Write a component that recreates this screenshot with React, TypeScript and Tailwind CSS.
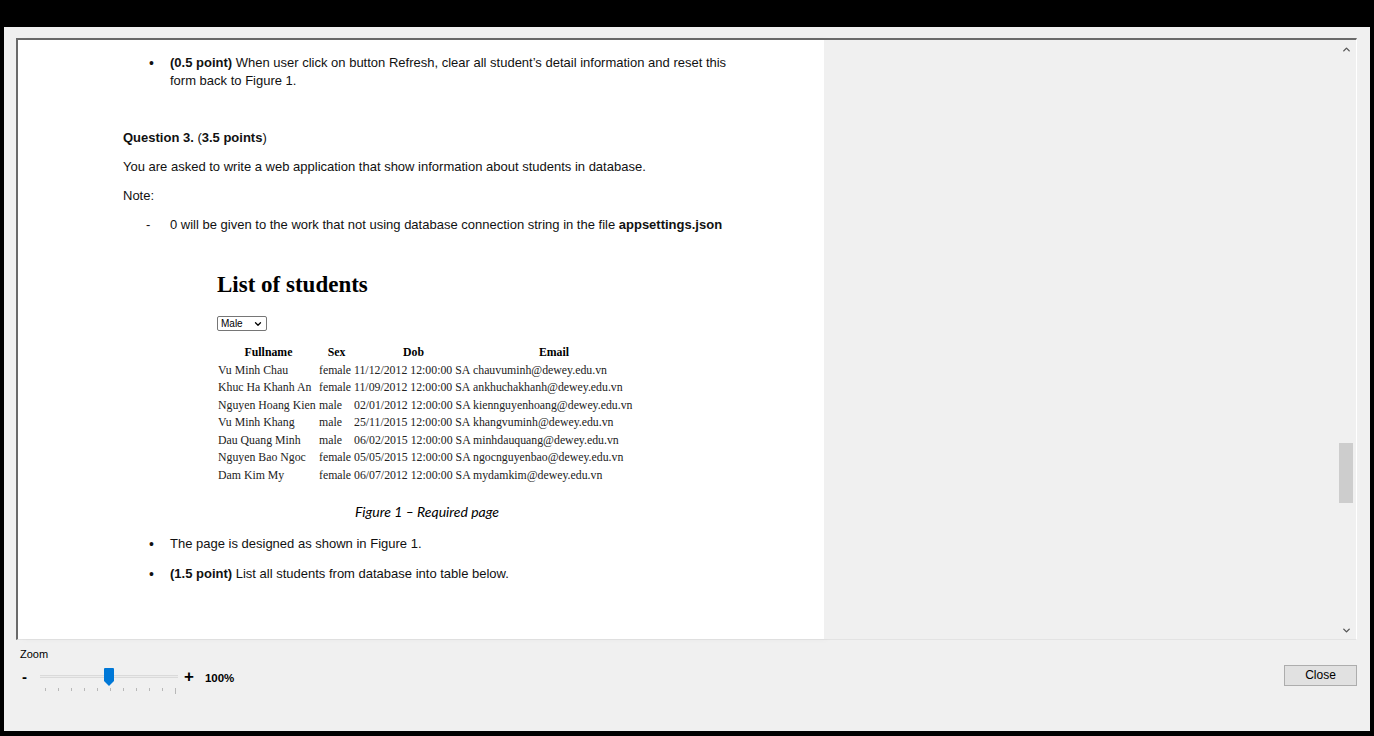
import { ChevronUp, ChevronDown } from "lucide-react";

const students = [
  ["Vu Minh Chau", "female", "11/12/2012 12:00:00 SA", "chauvuminh@dewey.edu.vn"],
  ["Khuc Ha Khanh An", "female", "11/09/2012 12:00:00 SA", "ankhuchakhanh@dewey.edu.vn"],
  ["Nguyen Hoang Kien", "male", "02/01/2012 12:00:00 SA", "kiennguyenhoang@dewey.edu.vn"],
  ["Vu Minh Khang", "male", "25/11/2015 12:00:00 SA", "khangvuminh@dewey.edu.vn"],
  ["Dau Quang Minh", "male", "06/02/2015 12:00:00 SA", "minhdauquang@dewey.edu.vn"],
  ["Nguyen Bao Ngoc", "female", "05/05/2015 12:00:00 SA", "ngocnguyenbao@dewey.edu.vn"],
  ["Dam Kim My", "female", "06/07/2012 12:00:00 SA", "mydamkim@dewey.edu.vn"],
];

const ticks = [0, 1, 2, 3, 4, 5, 6, 7, 8, 9, 10];

function Bullet({ children }: { children: React.ReactNode }) {
  return (
    <div className="flex">
      <div className="w-[47px] pl-[26px] text-[14px]">•</div>
      <div className="flex-1">{children}</div>
    </div>
  );
}

export default function App() {
  return (
    <div className="h-[736px] w-[1374px] bg-black pt-[27px] pl-[4px] pr-[4px] pb-[5px] flex">
      <div className="flex-1 bg-[#f0f0f0] flex flex-col pt-[11px] pl-[12px] pr-[13px]">
        {/* document frame */}
        <div className="h-[602px] flex border-l-2 border-t-2 border-[#6a6a6a] border-r border-r-white border-b border-b-[#e3e3e3]">
          <div
            className="w-[806px] bg-white overflow-hidden pt-[14px] text-[13px] leading-[18px] text-[#111] shadow-[4px_0_6px_rgba(0,0,0,0.04)]"
            style={{ fontFamily: '"Liberation Sans", Arial, sans-serif' }}
          >
            <div className="pl-[105px] pr-[90px]">
              <Bullet>
                <b>(0.5 point)</b> When user click on button Refresh, clear all student’s detail information and reset this form back to Figure 1.
              </Bullet>

              <div className="mt-[39px]">
                <b>Question 3.</b> (<b>3.5 points</b>)
              </div>
              <div className="mt-[11px] whitespace-nowrap">
                You are asked to write a web application that show information about students in database.
              </div>
              <div className="mt-[11px]">Note:</div>
              <div className="mt-[11px] flex">
                <div className="w-[47px] pl-[23px]">-</div>
                <div className="whitespace-nowrap">
                  0 will be given to the work that not using database connection string in the file <b>appsettings.json</b>
                </div>
              </div>

              {/* figure */}
              <div
                className="mt-[36px] pl-[94px] text-[#222]"
                style={{ fontFamily: '"Liberation Serif", "Times New Roman", serif' }}
              >
                <div className="text-[23px] leading-[30px] font-bold text-black">List of students</div>
                <div className="mt-[16px] w-[50px] h-[15px] border border-[#767676] rounded-[2px] flex items-center justify-between px-[3px] text-[10px] leading-none text-black" style={{ fontFamily: '"Liberation Sans", Arial, sans-serif' }}>
                  <span>Male</span>
                  <ChevronDown size={10} strokeWidth={3} />
                </div>
                <div className="mt-[13px] ml-[1px] grid grid-cols-[101px_35px_119px_162px] text-[11.8px] leading-[17.5px]">
                  <div className="font-bold text-center text-black">Fullname</div>
                  <div className="font-bold text-center text-black">Sex</div>
                  <div className="font-bold text-center text-black">Dob</div>
                  <div className="font-bold text-center text-black">Email</div>
                  {students.map((s, i) => (
                    <div key={i} className="contents">
                      <div className="whitespace-nowrap">{s[0]}</div>
                      <div>{s[1]}</div>
                      <div className="whitespace-nowrap">{s[2]}</div>
                      <div className="whitespace-nowrap">{s[3]}</div>
                    </div>
                  ))}
                </div>
              </div>
              <div
                className="mt-[19px] pl-[232px] italic text-[14px] text-black"
                style={{ fontFamily: "Lato, 'Open Sans', sans-serif" }}
              >
                Figure 1 – Required page
              </div>

              <div className="mt-[14px]">
                <Bullet>The page is designed as shown in Figure 1.</Bullet>
              </div>
              <div className="mt-[12px]">
                <Bullet>
                  <b>(1.5 point)</b> List all students from database into table below.
                </Bullet>
              </div>
            </div>
          </div>

          <div className="flex-1 bg-[#f0f0f0]" />

          {/* scrollbar */}
          <div className="w-[19px] bg-[#f0f0f0] flex flex-col items-center">
            <div className="h-[17px] flex items-center justify-center pt-[2px] text-[#555]">
              <ChevronUp size={11} strokeWidth={3} />
            </div>
            <div className="flex-1 w-full relative">
              <div className="absolute left-[2px] top-[386px] w-[14px] h-[60px] bg-[#cdcdcd]" />
            </div>
            <div className="h-[17px] flex items-center justify-center text-[#555]">
              <ChevronDown size={11} strokeWidth={3} />
            </div>
          </div>
        </div>

        {/* bottom zoom bar */}
        <div
          className="flex-1 flex items-start justify-between pl-[4px] pt-[7px]"
          style={{ fontFamily: '"Liberation Sans", Arial, sans-serif' }}
        >
          <div className="flex flex-col">
            <div className="text-[11px] leading-[14px] text-black">Zoom</div>
            <div className="mt-[7px] flex items-start">
              <div className="w-[20px] text-[15px] leading-[18px] font-bold text-black pl-[2px]">-</div>
              <div className="w-[138px] h-[26px] relative">
                <div className="absolute left-0 right-0 top-[7px] h-[3px] border-y border-[#dadada] bg-[#ececec]" />
                <div className="absolute left-[64px] top-0 w-[10px] h-[18px] flex flex-col">
                  <div className="h-[13px] bg-[#0078d7] rounded-t-[1px]" />
                  <div className="w-0 h-0 border-l-[5px] border-r-[5px] border-t-[5px] border-l-transparent border-r-transparent border-t-[#0078d7]" />
                </div>
                <div className="absolute left-[5px] right-[2px] top-[20px] flex justify-between items-start">
                  {ticks.map((t) => (
                    <div key={t} className={`w-px bg-[#b8b8b8] ${t === 10 ? "h-[6px]" : "h-[3px]"}`} />
                  ))}
                </div>
              </div>
              <div className="ml-[6px] text-[17px] leading-[18px] text-black font-bold">+</div>
              <div className="ml-[11px] pt-[3px] text-[11.5px] leading-[14px] font-bold text-black">100%</div>
            </div>
          </div>
          <div className="pt-[15px]">
            <button className="w-[73px] h-[21px] border border-[#adadad] bg-[#e1e1e1] text-[12px] text-black">
              Close
            </button>
          </div>
        </div>
      </div>
    </div>
  );
}
